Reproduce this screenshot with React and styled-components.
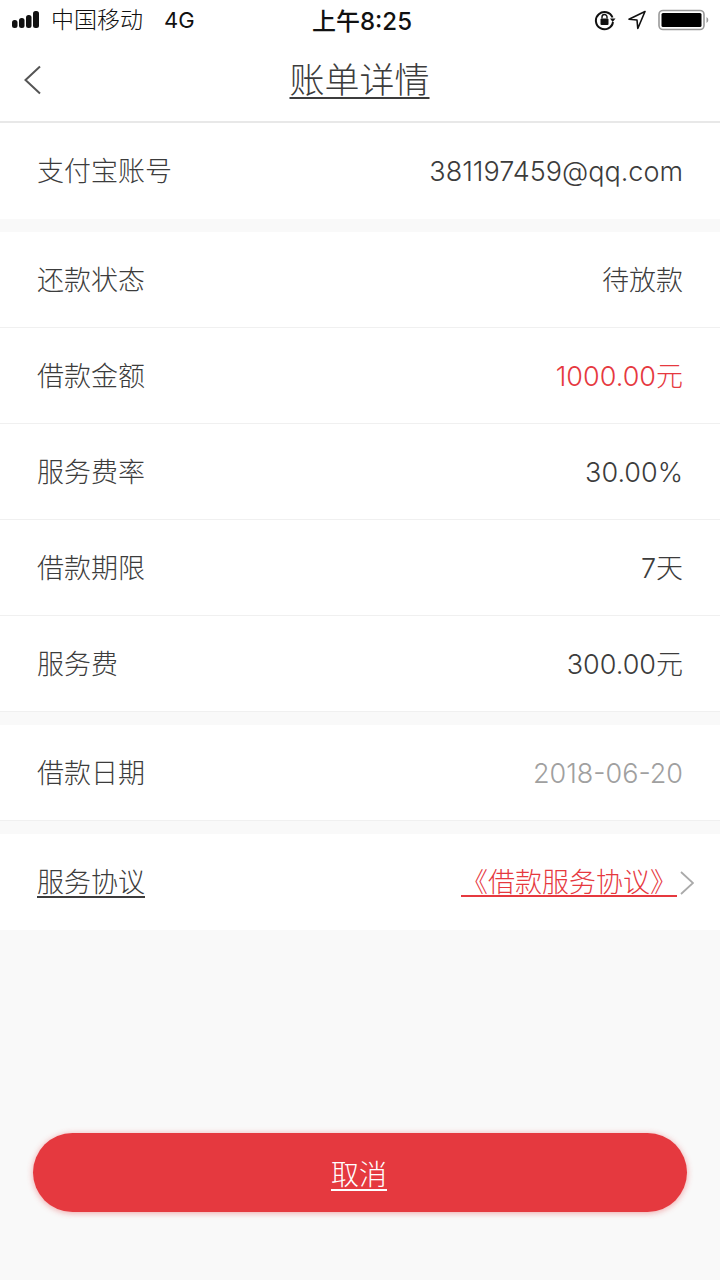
import React from 'react';
import styled, { createGlobalStyle } from 'styled-components';

const GlobalStyle = createGlobalStyle`
  html, body {
    margin: 0;
    padding: 0;
    background: #f9f9f9;
  }
  * {
    box-sizing: border-box;
  }
`;

const Page = styled.div`
  width: 720px;
  height: 1280px;
  display: flex;
  flex-direction: column;
  background: #f9f9f9;
  font-family: "Liberation Sans", "Noto Sans CJK SC", sans-serif;
  color: #3c3c3c;
  overflow: hidden;
`;

const StatusBar = styled.div`
  height: 40px;
  padding: 0 10px 1px 12px;
  display: grid;
  grid-template-columns: 1fr auto 1fr;
  align-items: center;
  background: #fff;
  color: #111;
`;

const StatusLeft = styled.div`
  display: flex;
  align-items: center;
  font-size: 22px;
`;

const Carrier = styled.span`
  margin-left: 7px;
  padding-bottom: 3px;
  font-family: "Noto Sans CJK SC", sans-serif;
  font-weight: 300;
  font-size: 23px;
`;

const Network = styled.span`
  margin-left: 21px;
  font-family: "Inter", sans-serif;
  font-size: 22px;
`;

const Clock = styled.div`
  margin-left: 2px;
  padding-bottom: 1px;
  font-family: "Inter", "Noto Sans CJK SC", sans-serif;
  font-size: 24px;
  font-weight: 500;
`;

const StatusRight = styled.div`
  display: flex;
  align-items: center;
  justify-content: flex-end;
  gap: 12px;
`;

const NavBar = styled.header`
  height: 83px;
  padding: 0 23px 5px;
  position: relative;
  display: flex;
  align-items: center;
  justify-content: center;
  background: #fff;
  border-bottom: 2px solid #e8e8e8;
`;

const BackButton = styled.svg`
  position: absolute;
  left: 23px;
  top: 25px;
`;

const Title = styled.h1`
  margin: 0 1px 0 0;
  font-family: "Noto Sans CJK SC", sans-serif;
  font-size: 35px;
  font-weight: 300;
  line-height: 50px;
  text-decoration: underline;
  text-decoration-thickness: 2px;
  text-underline-offset: 4px;
`;

const Section = styled.section`
  background: #fff;
  margin-bottom: ${props => (props.$last ? 0 : 13)}px;
`;

const Row = styled.div`
  height: 96px;
  padding: 2px 37px 0;
  display: flex;
  align-items: center;
  justify-content: space-between;
  font-family: "Inter", "Noto Sans CJK SC", sans-serif;
  font-weight: 300;
  font-size: 27px;
  line-height: 40px;
  border-bottom: ${props => (props.$plain ? 'none' : '1px solid #f0f0f0')};
`;

const Label = styled.span`
  text-decoration: ${props => (props.$link ? 'underline' : 'none')};
  text-underline-offset: 4px;
`;

const Value = styled.span`
  color: ${props => props.$color || '#3c3c3c'};
`;

const AgreementLink = styled.div`
  display: flex;
  align-items: center;
  gap: 3px;
  margin-right: -11px;
  color: #e6393f;
`;

const AgreementText = styled.span`
  text-decoration: underline;
  text-underline-offset: 3px;
`;

const Footer = styled.div`
  flex: 1;
  display: flex;
  align-items: flex-end;
  padding: 0 33px 68px;
`;

const CancelButton = styled.button`
  width: 100%;
  height: 79px;
  border: none;
  border-radius: 40px;
  background: #e5393f;
  box-shadow: 0 1px 6px rgba(229, 57, 63, 0.45);
  color: #fff;
  font-family: "Noto Sans CJK SC", sans-serif;
  font-size: 28px;
  font-weight: 300;
  text-decoration: underline;
  text-underline-offset: 4px;
  padding: 0 2px 0 0;
`;

const SignalBars = () => (
  <svg width="32" height="18" viewBox="0 0 32 18">
    <rect x="0" y="9" width="5.5" height="8" rx="2.5" fill="#111" />
    <rect x="7" y="7" width="5.5" height="10" rx="2.5" fill="#111" />
    <rect x="14" y="4" width="5.5" height="13" rx="2.5" fill="#111" />
    <rect x="21" y="0" width="6" height="17" rx="2.5" fill="#111" />
  </svg>
);

const RotationLock = () => (
  <svg width="22" height="22" viewBox="0 0 22 22">
    <path d="M18.5 8.5A8.6 8.6 0 1 0 19 13" fill="none" stroke="#111" strokeWidth="2" />
    <path d="M16 9.5l5.5 0-2.8 3.4z" fill="#111" />
    <rect x="6.5" y="9.5" width="8" height="6.5" rx="1" fill="#111" />
    <path d="M8 9.5V8a2.5 2.5 0 0 1 5 0v1.5" fill="none" stroke="#111" strokeWidth="1.4" />
  </svg>
);

const LocationArrow = () => (
  <svg width="18" height="20" viewBox="0 0 18 20">
    <path d="M17 1.5L1 9.2l8 .8 .8 8.5z" fill="none" stroke="#111" strokeWidth="1.6" strokeLinejoin="round" />
  </svg>
);

const Battery = () => (
  <svg width="52" height="22" viewBox="0 0 52 22">
    <rect x="1" y="1.5" width="45" height="19" rx="4" fill="none" stroke="#999" strokeWidth="1.6" />
    <rect x="3.5" y="4" width="40" height="14" rx="1.5" fill="#000" />
    <path d="M48.5 8a3.4 3.4 0 0 1 0 6z" fill="#999" />
  </svg>
);

const App = () => {
  const loanRows = [
    { label: '还款状态', value: '待放款' },
    { label: '借款金额', value: '1000.00元', color: '#e6393f' },
    { label: '服务费率', value: '30.00%' },
    { label: '借款期限', value: '7天' },
    { label: '服务费', value: '300.00元' },
  ];

  return (
    <Page>
      <GlobalStyle />
      <StatusBar>
        <StatusLeft>
          <SignalBars />
          <Carrier>中国移动</Carrier>
          <Network>4G</Network>
        </StatusLeft>
        <Clock>上午8:25</Clock>
        <StatusRight>
          <RotationLock />
          <LocationArrow />
          <Battery />
        </StatusRight>
      </StatusBar>

      <NavBar>
        <BackButton width="20" height="30" viewBox="0 0 20 30">
          <path d="M17 1.5L2.5 15 17 28.5" fill="none" stroke="#555" strokeWidth="2" />
        </BackButton>
        <Title>账单详情</Title>
      </NavBar>

      <Section>
        <Row $plain>
          <Label>支付宝账号</Label>
          <Value>381197459@qq.com</Value>
        </Row>
      </Section>

      <Section>
        {loanRows.map(row => (
          <Row key={row.label}>
            <Label>{row.label}</Label>
            <Value $color={row.color}>{row.value}</Value>
          </Row>
        ))}
      </Section>

      <Section>
        <Row>
          <Label>借款日期</Label>
          <Value $color="#a0a0a0">2018-06-20</Value>
        </Row>
      </Section>

      <Section $last>
        <Row $plain>
          <Label $link>服务协议</Label>
          <AgreementLink>
            <AgreementText>《借款服务协议》</AgreementText>
            <svg width="14" height="24" viewBox="0 0 14 24">
              <path d="M1 1l12 11L1 23" fill="none" stroke="#aaa" strokeWidth="1.8" />
            </svg>
          </AgreementLink>
        </Row>
      </Section>

      <Footer>
        <CancelButton>取消</CancelButton>
      </Footer>
    </Page>
  );
};

export default App;
